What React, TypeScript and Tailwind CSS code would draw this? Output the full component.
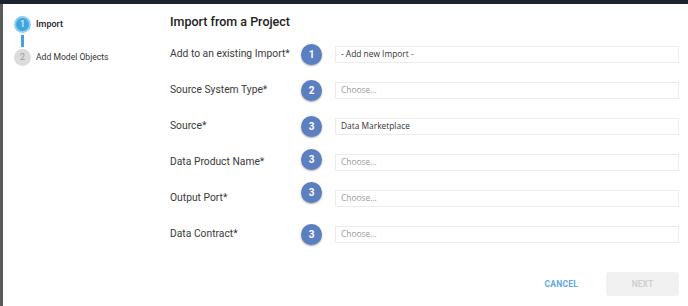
import React from "react";

const rows = [
  { label: "Add to an existing Import*", n: 1, value: "- Add new Import -", placeholder: false, shift: "" },
  { label: "Source System Type*", n: 2, value: "Choose...", placeholder: true, shift: "" },
  { label: "Source*", n: 3, value: "Data Marketplace", placeholder: false, shift: "" },
  { label: "Data Product Name*", n: 3, value: "Choose...", placeholder: true, shift: "-translate-y-[3px]" },
  { label: "Output Port*", n: 3, value: "Choose...", placeholder: true, shift: "-translate-y-[6px]" },
  { label: "Data Contract*", n: 3, value: "Choose...", placeholder: true, shift: "" },
];

export default function App() {
  return (
    <div className="w-[688px] h-[306px] bg-white flex flex-col overflow-hidden" style={{ fontFamily: "Roboto, 'Liberation Sans', sans-serif" }}>
      <div className="h-[4px] bg-[#1b2330] shrink-0" />
      <div className="flex flex-1 border-l-[3px] border-[#5a5a5a]">
        {/* Stepper */}
        <div className="w-[167px] shrink-0 pl-[11px] pt-[12px]">
          <div className="flex items-center gap-[5px]">
            <div className="w-[17px] h-[17px] rounded-full bg-[#8fcdef] flex items-center justify-center">
              <div className="w-[13px] h-[13px] rounded-full bg-[#3fa6dd] flex items-center justify-center text-white text-[9px]">1</div>
            </div>
            <span className="text-[9px] font-medium text-[#222]">Import</span>
          </div>
          <div className="ml-[7px] w-[3px] h-[12px] my-[2px] bg-[#3fa6dd]" />
          <div className="flex items-center gap-[5px]">
            <div className="w-[17px] h-[17px] rounded-full bg-[#dcdcdc] flex items-center justify-center text-[#9a9a9a] text-[9px]">2</div>
            <span className="text-[8.6px] text-[#333]">Add Model Objects</span>
          </div>
        </div>
        {/* Main */}
        <div className="flex-1 flex flex-col pr-[9px]">
          <div className="h-[32px] pt-[10px] text-[12.5px] font-medium text-[#222] leading-[15px]">Import from a Project</div>
          <div className="flex flex-col">
            {rows.map((r, i) => (
              <div key={i} className="h-[36px] flex items-center">
                <div className="w-[130px] text-[10.3px] text-[#3a3a3a] whitespace-nowrap">{r.label}</div>
                <div className={`ml-[1px] w-[21px] h-[21px] rounded-full bg-[#5b7fc0] shadow-[0_1px_2px_rgba(0,0,0,0.35)] flex items-center justify-center text-white text-[10px] font-bold ${r.shift}`}>
                  {r.n}
                </div>
                <div className="ml-[13px] flex-1 h-[17px] border border-[#ececec] flex items-center pl-[5px]" style={{ fontFamily: "'Open Sans', 'Noto Sans', sans-serif" }}>
                  <span className={`text-[8.4px] ${r.placeholder ? "text-[#9a9a9a]" : "text-[#333]"}`}>{r.value}</span>
                </div>
              </div>
            ))}
          </div>
          <div className="flex-1 flex items-end justify-end pb-[10px] gap-[28px]">
            <button className="text-[8.5px] font-bold text-[#5aaadf] tracking-[0.2px] h-[24px]">CANCEL</button>
            <button className="w-[73px] h-[24px] rounded-[3px] bg-[#f1f1f1] text-[8.5px] font-bold text-[#cfcfcf]">NEXT</button>
          </div>
        </div>
      </div>
    </div>
  );
}
